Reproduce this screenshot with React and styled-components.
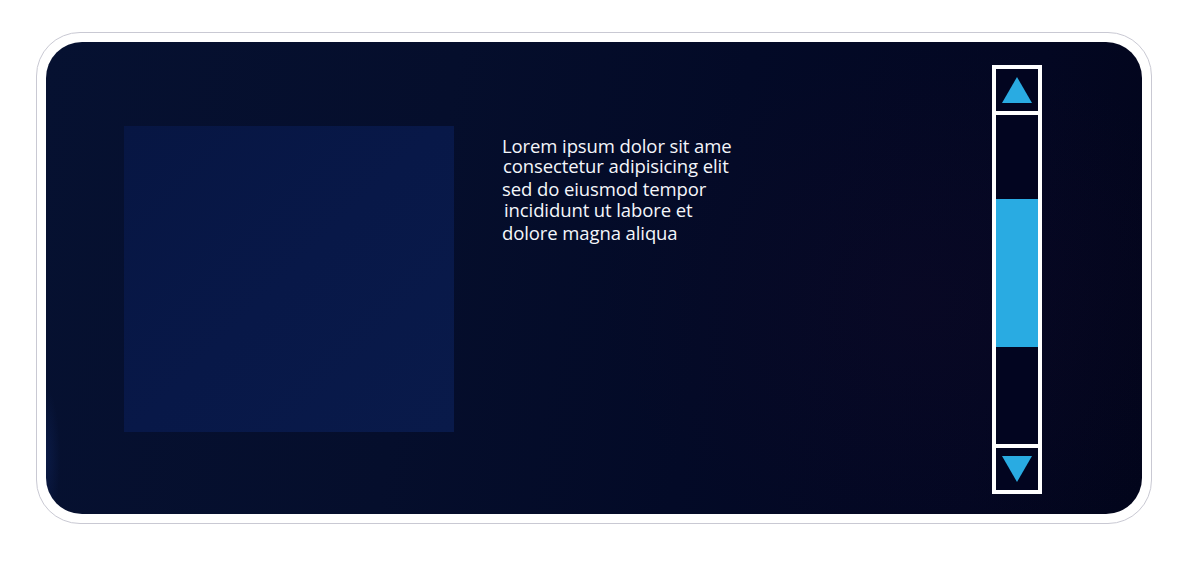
import React from 'react';
import styled, { createGlobalStyle } from 'styled-components';

const GlobalStyle = createGlobalStyle`
  html, body {
    margin: 0;
    padding: 0;
    background: #ffffff;
  }
  body {
    font-family: "Open Sans", "Noto Sans", sans-serif;
  }
`;

const Page = styled.div`
  width: 1188px;
  height: 572px;
  padding: 32px 0 0 36px;
  box-sizing: border-box;
`;

const Frame = styled.div`
  width: 1116px;
  height: 492px;
  box-sizing: border-box;
  padding: 9px;
  border: 1px solid #c9c9d3;
  border-radius: 44px;
  background: #ffffff;
`;

const Screen = styled.div`
  height: 100%;
  box-sizing: border-box;
  display: flex;
  align-items: flex-start;
  padding: 23px 100px 20px 78px;
  border-radius: 36px;
  background:
    radial-gradient(ellipse 14px 70px at 0% 88%, rgba(20, 45, 110, 0.35), transparent),
    radial-gradient(ellipse 320px 260px at 80% 55%, rgba(24, 10, 40, 0.25), transparent),
    linear-gradient(100deg, #061131 0%, #050e2c 35%, #030a27 60%, #030722 85%, #02051b 100%);
`;

const Panel = styled.div`
  flex: none;
  width: 330px;
  height: 306px;
  margin-top: 61px;
  background: linear-gradient(135deg, #071643 0%, #081848 50%, #091a4a 100%);
`;

const Copy = styled.div`
  margin: 70px 0 0 48px;
  color: #f4f6fb;
  font-size: 18.5px;
  letter-spacing: -0.1px;
`;

const Line = styled.div`
  line-height: 22px;
  height: 22px;
  margin-top: ${p => p.$gap || 0}px;
  padding-left: ${p => p.$indent || 0}px;
  white-space: nowrap;
`;

const ScrollBar = styled.div`
  flex: none;
  margin-left: auto;
  align-self: stretch;
  width: 50px;
  box-sizing: border-box;
  padding: 4px;
  display: flex;
  flex-direction: column;
  gap: 4px;
  background: #ffffff;
`;

const Arrow = styled.button`
  flex: none;
  height: 42px;
  border: 0;
  padding: 0;
  background: #020520;
  display: flex;
  align-items: center;
  justify-content: center;
`;

const Track = styled.div`
  flex: 1;
  position: relative;
  background: #020520;
`;

const Thumb = styled.div`
  position: absolute;
  left: 0;
  right: 0;
  background: #29abe2;
`;

const lines = [
  { text: 'Lorem ipsum dolor sit ame', gap: 0, indent: 0 },
  { text: 'consectetur adipisicing elit', gap: -2, indent: 1 },
  { text: 'sed do eiusmod tempor', gap: 1, indent: 0 },
  { text: 'incididunt ut labore et', gap: -1, indent: 2 },
  { text: 'dolore magna aliqua', gap: 1, indent: 0 },
];

function Triangle({ down }) {
  return (
    <svg width="30" height="26" viewBox="0 0 30 26">
      {down
        ? <polygon points="0,0 30,0 15,26" fill="#29abe2" />
        : <polygon points="15,0 30,26 0,26" fill="#29abe2" />}
    </svg>
  );
}

export default function App() {
  return (
    <>
      <GlobalStyle />
      <Page>
        <Frame>
          <Screen>
            <Panel />
            <Copy>
              {lines.map(l => (
                <Line key={l.text} $gap={l.gap} $indent={l.indent}>{l.text}</Line>
              ))}
            </Copy>
            <ScrollBar>
              <Arrow aria-label="Scroll up"><Triangle /></Arrow>
              <Track>
                <Thumb style={{ top: 84, height: 148 }} />
              </Track>
              <Arrow aria-label="Scroll down"><Triangle down /></Arrow>
            </ScrollBar>
          </Screen>
        </Frame>
      </Page>
    </>
  );
}
